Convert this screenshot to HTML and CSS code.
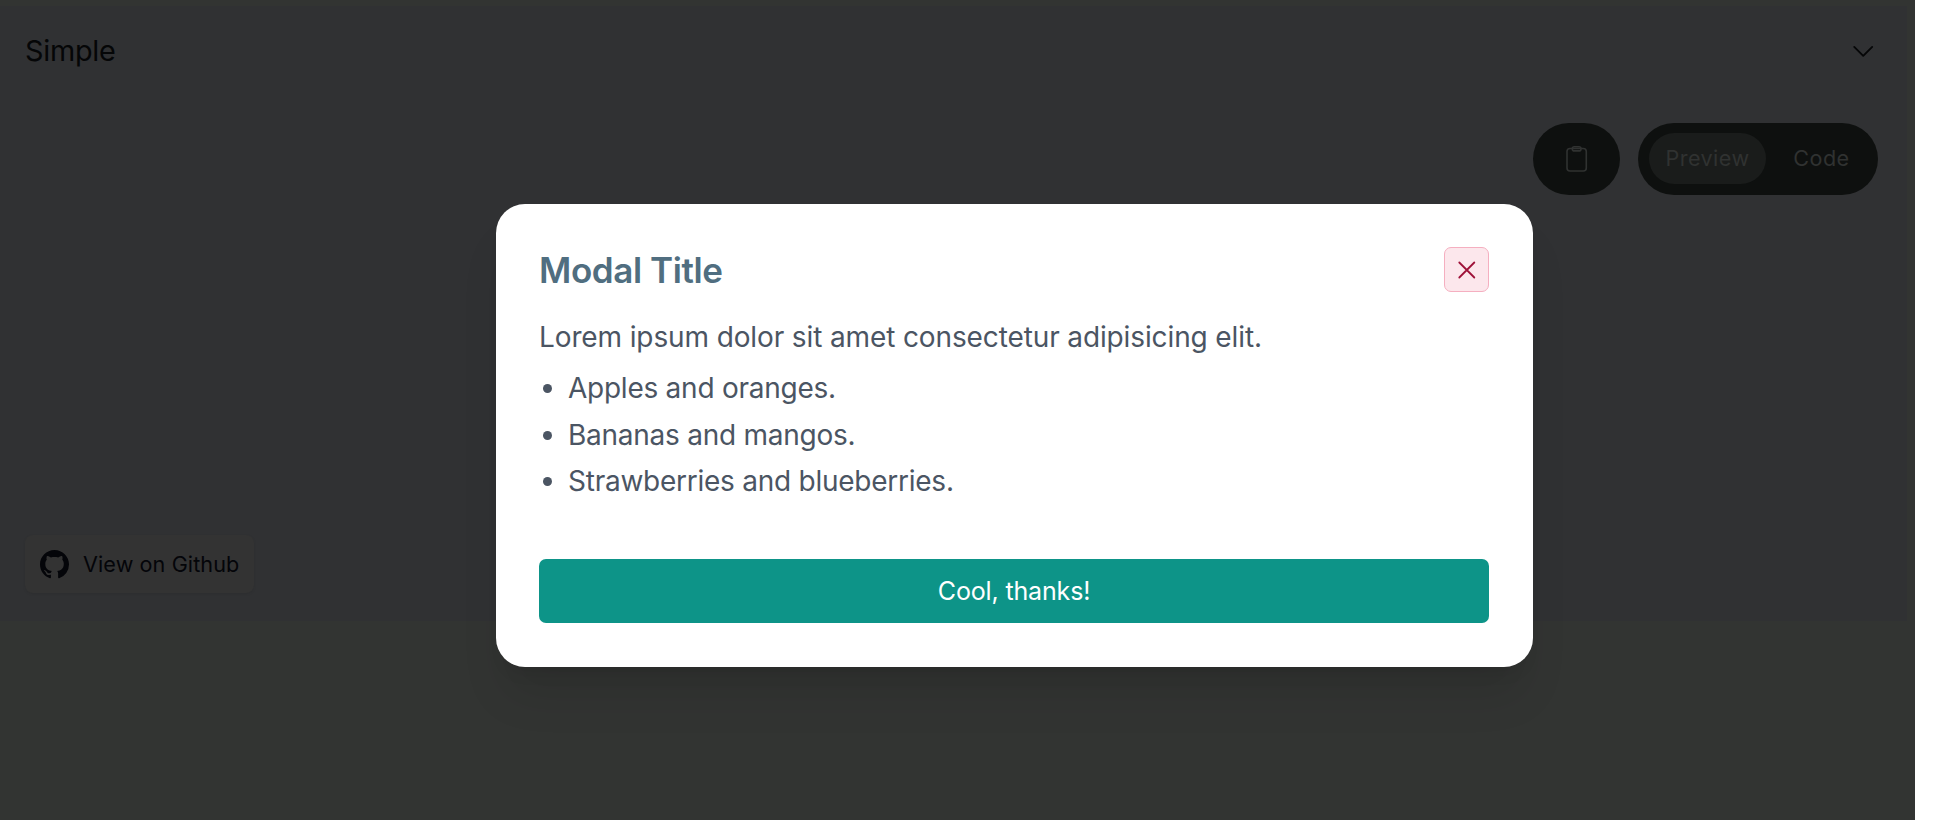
FILE: index.html
```html
<!DOCTYPE html>
<html lang="en">
<head>
<meta charset="utf-8">
<title>Modal</title>
<link rel="stylesheet" href="styles.css">
</head>
<body>
<main class="page">
  <section class="panel">
    <header class="panel-header">
      <h2 class="panel-title">Simple</h2>
      <svg class="chevron" viewBox="0 0 24 24" fill="none" stroke="currentColor" stroke-width="1.7" stroke-linecap="round" stroke-linejoin="round"><path d="M3.900 8.200 12.200 16.500 20.500 8.200"/></svg>
    </header>
    <div class="toolbar">
      <button class="copy" aria-label="Copy"><svg class="clipboard" viewBox="0 0 24 30" fill="none" stroke="currentColor" stroke-width="1.600"><rect x="2" y="4.500" width="19.300" height="22.500" rx="3"/><rect x="7.300" y="2.700" width="8.700" height="4.200" rx="2"/></svg></button>
      <div class="tabs"><button class="tab tab-active">Preview</button><button class="tab">Code</button></div>
    </div>
    <a class="github">
      <svg class="github-icon" viewBox="0 0 16 16" fill="currentColor"><path d="M8 0C3.580 0 0 3.580 0 8c0 3.540 2.290 6.530 5.470 7.590.4.070.55-.17.55-.38 0-.19-.01-.82-.01-1.490-2.010.37-2.530-.49-2.690-.94-.09-.23-.48-.94-.82-1.130-.28-.15-.68-.52-.01-.53.63-.01 1.080.58 1.230.82.72 1.210 1.870.87 2.330.66.070-.52.28-.87.51-1.070-1.780-.2-3.640-.89-3.640-3.950 0-.87.31-1.590.82-2.150-.08-.2-.36-1.020.08-2.120 0 0 .67-.21 2.200.82.640-.18 1.320-.27 2-.27s1.360.09 2 .27c1.530-1.040 2.200-.82 2.200-.82.44 1.100.16 1.920.08 2.120.51.56.82 1.270.82 2.150 0 3.070-1.870 3.750-3.650 3.950.29.25.54.73.54 1.480 0 1.070-.01 1.930-.01 2.200 0 .21.15.46.55.38A8.010 8.010 0 0 0 16 8c0-4.420-3.580-8-8-8Z"/></svg>
      <span>View on Github</span>
    </a>
  </section>
</main>
<div class="modal-layer">
  <div class="modal" role="dialog">
    <div class="modal-header">
      <h1 class="modal-title">Modal Title</h1>
      <button class="close" aria-label="Close"><svg class="close-icon" viewBox="0 0 18 18" stroke="currentColor" stroke-width="1.800" stroke-linecap="round"><path d="M1.300 1.500l15 15M16.300 1.500l-15 15"/></svg></button>
    </div>
    <p class="modal-text">Lorem ipsum dolor sit amet consectetur adipisicing elit.</p>
    <ul class="modal-list">
      <li>Apples and oranges.</li>
      <li>Bananas and mangos.</li>
      <li>Strawberries and blueberries.</li>
    </ul>
    <button class="confirm">Cool, thanks!</button>
  </div>
</div>
</body>
</html>
```
FILE: styles.css
```css
* { box-sizing: border-box; }
body { margin: 0; background: #fff; font-family: Inter, sans-serif; overflow: hidden; }
button { border: 0; margin: 0; padding: 0; font: inherit; color: inherit; letter-spacing: inherit; background: none; }
h1, h2, p, ul { margin: 0; padding: 0; font-weight: 400; }
.page { width: 1915px; height: 820px; padding-top: 6px; background: #323432; }
.panel { width: 1907px; height: 615px; padding: 0 31px 0 25px; background: #303133; display: flex; flex-direction: column; }
.panel-header { height: 89px; display: flex; align-items: center; justify-content: space-between; }
.panel-title { font-size: 28.8px; line-height: 40px; letter-spacing: -.25px; color: #050607; }
.chevron { width: 26px; height: 26px; color: #050607; }
.toolbar { margin-top: 28px; display: flex; justify-content: flex-end; gap: 18px; color: #303231; font-size: 21.6px; letter-spacing: .45px; margin-right: -2px; }
.copy { width: 87px; height: 72px; border-radius: 36px; background: #0e100f; display: flex; align-items: center; justify-content: center; }
.clipboard { width: 24px; height: 30px; }
.tabs { width: 240px; height: 72px; border-radius: 36px; background: #0e100f; padding: 10px 1px 10px 11px; display: flex; }
.tab { height: 51px; width: 111px; padding-bottom: 1px; border-radius: 26px; text-align: center; }
.tab-active { width: 117px; background: #1a1c1b; }
.github { margin-top: 340px; width: 229px; height: 58px; padding-left: 15px; border-radius: 8px; background: #333; box-shadow: 0 1px 3px rgba(0,0,0,.08); display: flex; align-items: center; gap: 14px; color: #040509; font-size: 21.6px; letter-spacing: .1px; white-space: nowrap; }
.github-icon { width: 29px; height: 29px; flex: none; }
.modal-layer { position: absolute; inset: 0 18px 8px 0; padding: 204px 0 0 496px; }
.modal { width: 1037px; height: 463px; padding: 43px 44px 44px 43px; border-radius: 29px; background: #fff; color: #4b5563; box-shadow: 0 36px 45px -9px rgba(0,0,0,.1), 0 14px 18px -11px rgba(0,0,0,.1); display: flex; flex-direction: column; }
.modal-header { display: flex; justify-content: space-between; align-items: center; height: 45px; }
.modal-title { padding-top: 2px; font-size: 35px; line-height: 45px; font-weight: 600; letter-spacing: -.4px; color: #506e80; }
.close { width: 45px; height: 45px; border: 1px solid #f5afc0; border-radius: 7px; background: #fce7ec; color: #9f1239; display: flex; align-items: center; justify-content: center; }
.close-icon { width: 18px; height: 18px; }
.modal-text { margin-top: 23px; font-size: 28px; line-height: 44px; letter-spacing: -.12px; white-space: nowrap; }
.modal-list { margin-top: 6px; padding-left: 29px; font-size: 28px; line-height: 46.7px; letter-spacing: -.25px; }
.confirm { margin-top: auto; height: 64px; border-radius: 7px; background: #0d9488; color: #fff; font-size: 25px; letter-spacing: -.15px; }
```
